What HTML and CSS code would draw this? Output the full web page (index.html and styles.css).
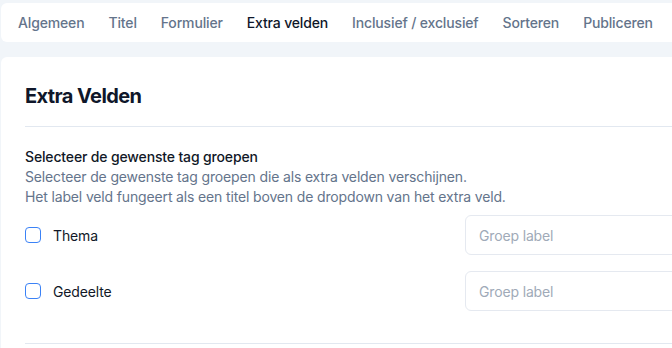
FILE: index.html
```html
<!DOCTYPE html>
<html>
  <head>
    <meta charset="UTF-8" />
    <meta name="viewport" content="width=device-width, initial-scale=1.0" />
    <title>Extra velden</title>
    <link rel="stylesheet" href="styles.css">
  </head>
  <body>
    <div class="page">
      <nav class="tabs">
        <a class="tab" href="#">Algemeen</a>
        <a class="tab" href="#">Titel</a>
        <a class="tab" href="#">Formulier</a>
        <a class="tab active" href="#">Extra velden</a>
        <a class="tab" href="#">Inclusief / exclusief</a>
        <a class="tab" href="#">Sorteren</a>
        <a class="tab" href="#">Publiceren</a>
      </nav>

      <section class="card">
        <h2 class="card-title">Extra Velden</h2>

        <div class="field-group">
          <div class="group-label">Selecteer de gewenste tag groepen</div>
          <p class="group-help">
            Selecteer de gewenste tag groepen die als extra velden verschijnen.<br />
            Het label veld fungeert als een titel boven de dropdown van het extra veld.
          </p>

          <div class="tag-row">
            <label class="tag-check">
              <input type="checkbox" />
              <span>Thema</span>
            </label>
            <input class="tag-input" type="text" placeholder="Groep label" />
          </div>

          <div class="tag-row">
            <label class="tag-check">
              <input type="checkbox" />
              <span>Gedeelte</span>
            </label>
            <input class="tag-input" type="text" placeholder="Groep label" />
          </div>
        </div>
      </section>
    </div>
  </body>
</html>
```

FILE: styles.css
```css
* {
  box-sizing: border-box;
  margin: 0;
  padding: 0;
}

body {
  font-family: 'Inter', 'Noto Sans', Arial, sans-serif;
  letter-spacing: -0.15px;
  background-color: #f1f5f9;
  color: #0f172a;
  overflow: hidden;
}

.page {
  width: 960px;
  padding: 3px 0 0 1px;
}

.tabs {
  display: flex;
  align-items: center;
  height: 39px;
  padding: 0 5px;
  margin-bottom: 15px;
  background-color: #fff;
  border-radius: 6px;
}

.tab {
  padding: 0 12px;
  font-size: 14px;
  font-weight: 500;
  color: #64748b;
  text-decoration: none;
  white-space: nowrap;
}

.tab.active {
  color: #0f172a;
}

.card {
  background-color: #fff;
  border-radius: 6px;
  padding: 25px 24px 0;
  height: 400px;
}

.card-title {
  font-size: 20px;
  line-height: 28px;
  font-weight: 700;
  letter-spacing: -0.6px;
  color: #0f172a;
  padding-bottom: 16px;
  border-bottom: 1px solid #e2e8f0;
}

.field-group {
  padding: 20px 0 32px;
  border-bottom: 1px solid #e2e8f0;
}

.group-label {
  font-size: 14px;
  line-height: 20px;
  font-weight: 500;
  color: #111827;
}

.group-help {
  font-size: 14px;
  line-height: 20px;
  color: #64748b;
  margin-bottom: 8px;
}

.tag-row {
  display: flex;
  align-items: center;
  margin-bottom: 16px;
}

.tag-row:last-child {
  margin-bottom: 0;
}

.tag-check {
  display: flex;
  align-items: center;
  gap: 12px;
  width: 440px;
  font-size: 14px;
  color: #111827;
}

.tag-check input[type='checkbox'] {
  appearance: none;
  width: 16px;
  height: 16px;
  border: 1.5px solid #3b82f6;
  border-radius: 4px;
  background-color: #fff;
}

.tag-input {
  width: 300px;
  height: 40px;
  padding: 0 13px;
  border: 1px solid #e5e9f0;
  border-radius: 6px;
  font-family: 'Inter', 'Noto Sans', Arial, sans-serif;
  font-size: 14px;
  letter-spacing: -0.15px;
  color: #0f172a;
  outline: none;
}

.tag-input::placeholder {
  color: #a0aab8;
}
```
